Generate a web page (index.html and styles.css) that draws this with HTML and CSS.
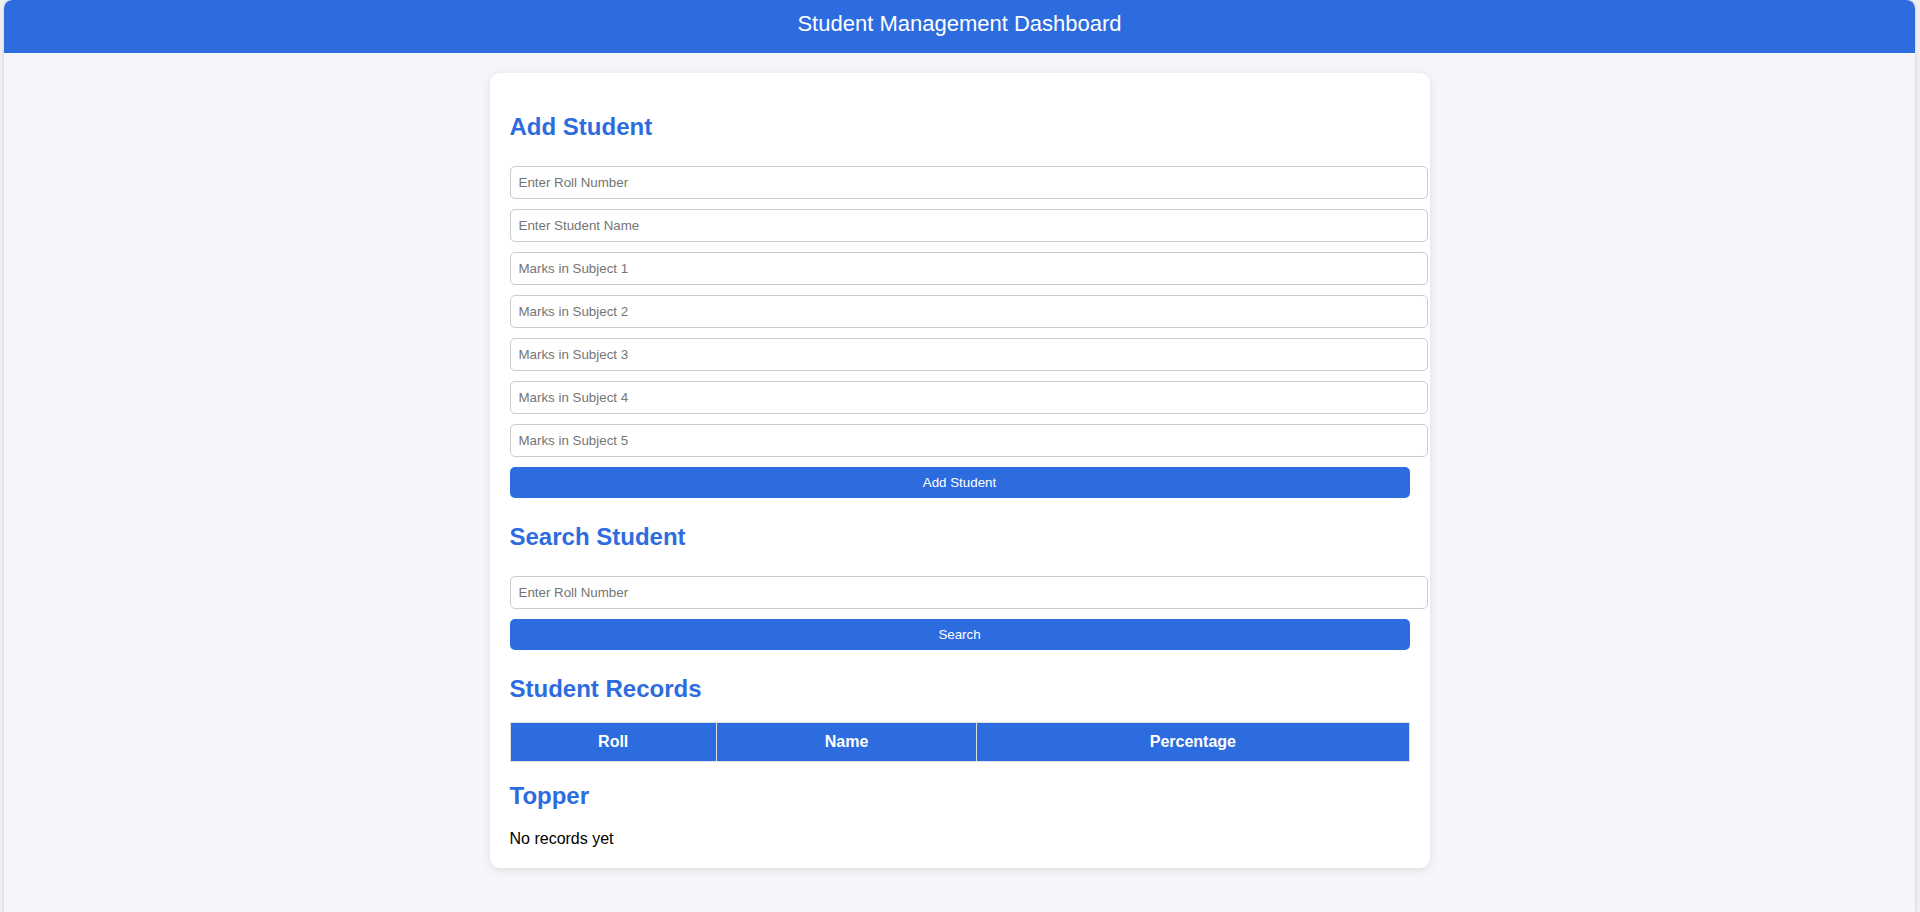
FILE: index.html
```html
<!DOCTYPE html>
<html lang="en">
<head>
<meta charset="utf-8">
<title>Student Management Dashboard</title>
<link rel="stylesheet" href="styles.css">
</head>
<body>
<header class="topbar">
  <h1 class="topbar-title">Student Management Dashboard</h1>
</header>
<main class="card">
  <h2 class="section-title">Add Student</h2>
  <div class="form">
    <input class="field" type="text" placeholder="Enter Roll Number">
    <input class="field" type="text" placeholder="Enter Student Name">
    <input class="field" type="text" placeholder="Marks in Subject 1">
    <input class="field" type="text" placeholder="Marks in Subject 2">
    <input class="field" type="text" placeholder="Marks in Subject 3">
    <input class="field" type="text" placeholder="Marks in Subject 4">
    <input class="field" type="text" placeholder="Marks in Subject 5">
    <button class="btn" type="button">Add Student</button>
  </div>

  <h2 class="section-title">Search Student</h2>
  <div class="form">
    <input class="field" type="text" placeholder="Enter Roll Number">
    <button class="btn" type="button">Search</button>
  </div>

  <h2 class="section-title">Student Records</h2>
  <table class="records">
    <thead>
      <tr>
        <th class="records-head">Roll</th>
        <th class="records-head">Name</th>
        <th class="records-head">Percentage</th>
      </tr>
    </thead>
    <tbody></tbody>
  </table>

  <h2 class="section-title">Topper</h2>
  <div class="topper">No records yet</div>
</main>
</body>
</html>
```

FILE: styles.css
```css
html {
  background: #efefef;
}

body {
  margin: 0 5px 0 4px;
  min-height: 912px;
  background: #f4f6fa;
  font-family: "Liberation Sans", Arial, sans-serif;
  font-size: 16px;
  color: #000;
  border-radius: 8px 8px 0 0;
  box-shadow: 0 0 3px rgba(0, 0, 0, 0.18);
}

.topbar {
  background: #2d6cdf;
  color: #fff;
  text-align: center;
  padding: 11px 0 16px;
  border-radius: 8px 8px 0 0;
}

.topbar-title {
  margin: 0;
  font-size: 22px;
  font-weight: normal;
  line-height: 26px;
}

.card {
  display: block;
  width: 900px;
  margin: 20px auto;
  padding: 20px;
  background: #fff;
  border-radius: 10px;
  box-shadow: 0 2px 10px rgba(0, 0, 0, 0.1);
}

.section-title {
  margin: 19.92px 0;
  font-size: 24px;
  font-weight: bold;
  color: #2d6cdf;
}

.form {
  display: flex;
  flex-direction: column;
  align-items: flex-start;
  gap: 10px;
  padding: 5px 0;
}

.field {
  display: block;
  width: 100%;
  box-sizing: content-box;
  margin: 0;
  padding: 8px;
  border: 1px solid #ccc;
  border-radius: 5px;
  font-family: "Liberation Sans", Arial, sans-serif;
  font-size: 13.333px;
  background: #fff;
}

.field::placeholder {
  color: #757575;
}

.btn {
  display: block;
  width: 100%;
  box-sizing: border-box;
  margin: 0;
  padding: 8px;
  border: none;
  border-radius: 5px;
  background: #2d6cdf;
  color: #fff;
  font-family: "Liberation Sans", Arial, sans-serif;
  font-size: 13.333px;
}

.records {
  width: 100%;
  border-collapse: collapse;
  margin: 0 0 20px;
}

.records-head {
  padding: 10px;
  border: 1px solid #ddd;
  background: #2d6cdf;
  color: #fff;
  font-weight: bold;
  text-align: center;
}

.topper {
  margin: 0;
  line-height: 18px;
}
```
